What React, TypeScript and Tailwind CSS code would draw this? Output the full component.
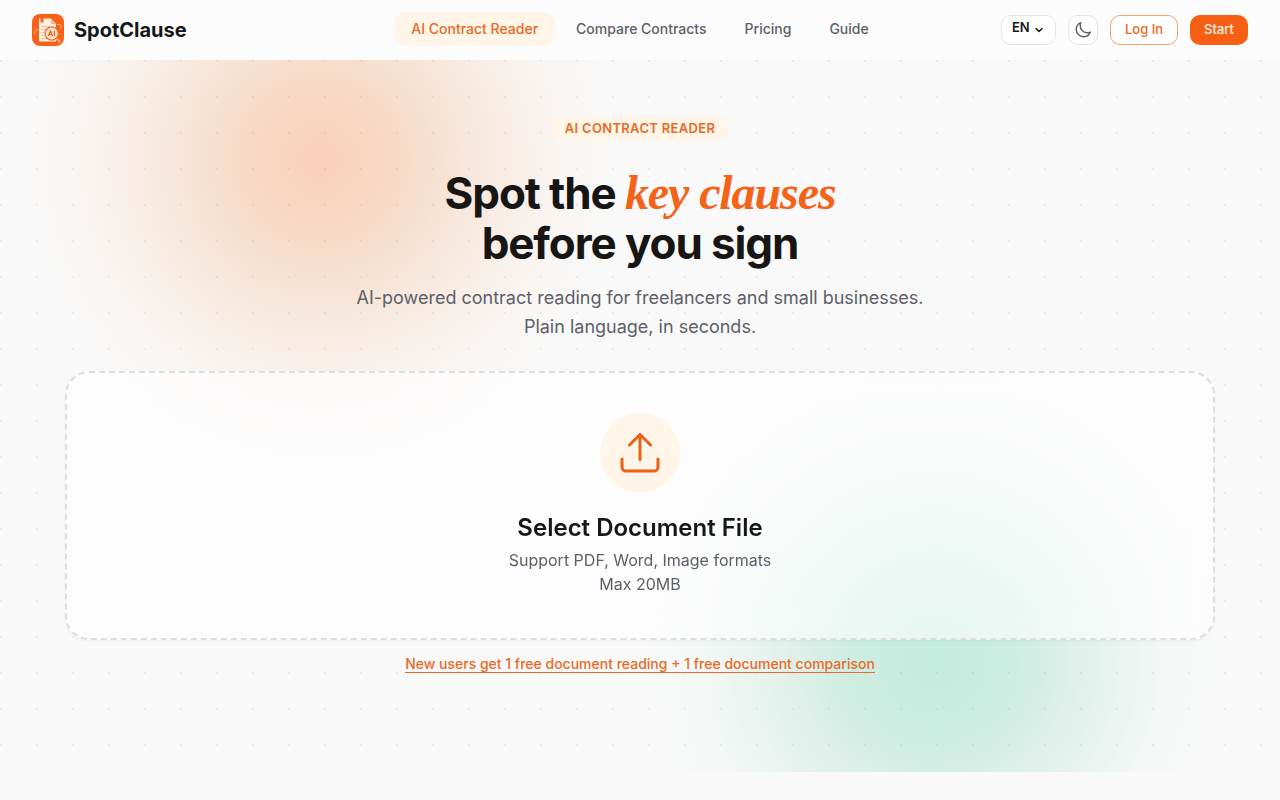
import { useState } from 'react';
import { ChevronDown } from 'lucide-react';

const navLinks = [
  { label: 'AI Contract Reader', href: '#reader', active: true },
  { label: 'Compare Contracts', href: '#compare', active: false },
  { label: 'Pricing', href: '#pricing', active: false },
  { label: 'Guide', href: '#guide', active: false },
];

function Logo() {
  return (
    <svg width="32" height="32" viewBox="0 0 32 32" fill="none" aria-hidden="true">
      <defs>
        <linearGradient id="logo-bg" x1="0" y1="0" x2="32" y2="32">
          <stop stopColor="#f9601a" />
          <stop offset="1" stopColor="#e84708" />
        </linearGradient>
      </defs>
      <rect width="32" height="32" rx="8" fill="url(#logo-bg)" />
      <path d="M7 4.500h1.500v4.500l1.500-1 1.500 1V4.500H19l5 5.500v17.500H7z" fill="#fff0e2" />
      <path d="M19 4.500V10h5z" fill="#f8b58b" />
      <path d="M9 12.500h9M9 15.500h5M9 18.500h3.500M9 21.500h3.500M9 24.500h6" stroke="#f7c3a4" strokeWidth="1" />
      <path d="M5.500 15.500c-3 1.500-4 3-2 4.500M25.500 10.500c4-.3 4.800 1.700 3 3.700" stroke="#ffc49c" strokeWidth="1" strokeLinecap="round" />
      <path d="M24.500 24.500l3.200 3.400" stroke="#f8a46c" strokeWidth="2.500" strokeLinecap="round" />
      <circle cx="19.700" cy="19.500" r="6.500" fill="#fcdcc2" stroke="#ee7635" strokeWidth="1.500" />
      <circle cx="19.700" cy="19.500" r="5.300" stroke="#fff0e0" strokeWidth="1" />
      <path d="M16.500 22l2-5 2 5M17.200 20.500h2.600M22.400 17v5" stroke="#eb641f" strokeWidth="1.200" />
    </svg>
  );
}

function Header() {
  const [lang, setLang] = useState('EN');

  return (
    <header className="grid h-15 grid-cols-[1fr_auto_1fr] items-center bg-[#fcfcfc] px-8">
      <a href="#home" className="flex items-center gap-2.5 text-xl font-bold text-[#171717]">
        <Logo />
        SpotClause
      </a>

      <nav className="flex gap-1 pb-0.5">
        {navLinks.map((link) => (
          <a
            key={link.label}
            href={link.href}
            className={
              link.active
                ? 'rounded-xl bg-[#fff5e8] px-[17px] py-[7px] text-sm font-medium text-[#ea6a25]'
                : 'rounded-xl px-[17px] py-[7px] text-sm font-medium text-[#5d6068]'
            }
          >
            {link.label}
          </a>
        ))}
      </nav>

      <div className="flex items-center justify-end gap-3">
        <div className="relative">
          <select
            aria-label="Language"
            value={lang}
            onChange={(e) => setLang(e.target.value)}
            className="block h-[30px] w-[55px] appearance-none rounded-[10px] border border-[#e2e4e8] bg-white pb-1 pl-2.5 text-[13px] font-semibold text-[#171717]"
          >
            <option>EN</option>
            <option>FR</option>
            <option>ES</option>
          </select>
          <ChevronDown size={12} strokeWidth={3} className="pointer-events-none absolute top-[9px] right-[11px] text-[#171717]" />
        </div>
        <button
          type="button"
          aria-label="Toggle dark mode"
          className="flex size-[30px] items-center justify-center rounded-[10px] border border-[#e2e4e8] bg-white text-[#5d6068]"
        >
          <svg width="18" height="18" viewBox="0 0 24 24" fill="none" stroke="currentColor" strokeWidth="1.900" strokeLinejoin="round" strokeLinecap="round" aria-hidden="true">
            <path d="M21.750 15A9.700 9.700 0 0 1 18 15.750C12.600 15.750 8.250 11.400 8.250 6c0-1.330.270-2.600.750-3.750A9.750 9.750 0 0 0 3 11.250C3 16.640 7.370 21 12.750 21a9.750 9.750 0 0 0 9-6z" />
          </svg>
        </button>
        <button type="button" className="h-[30px] rounded-[10px] border border-[#f5a56b] bg-white px-3.5 text-[13px] font-medium text-[#ea6a25]">
          Log In
        </button>
        <button type="button" className="h-[30px] rounded-[10px] bg-[#f75f14] px-3.5 text-[13px] font-medium text-[#fff3ea]">
          Start
        </button>
      </div>
    </header>
  );
}

function UploadCard() {
  return (
    <label
      htmlFor="document"
      className="flex w-full max-w-[1150px] cursor-pointer flex-col items-center rounded-3xl border-2 border-dashed border-[#dedede] bg-white/60 pt-10 pb-[42px] shadow-[0_1px_3px_rgba(0,0,0,0.05)] backdrop-blur-md"
    >
      <input id="document" type="file" className="sr-only" />
      <span className="flex size-20 items-center justify-center rounded-full bg-[#fff5e8]">
        <svg width="40" height="40" viewBox="0 0 40 40" fill="none" stroke="#ee5f17" strokeWidth="3" strokeLinecap="round" strokeLinejoin="round" aria-hidden="true">
          <path d="M20 26.500V1.500M9.500 12 20 1.500 30.500 12" />
          <path d="M2 26v8a4 4 0 0 0 4 4h28a4 4 0 0 0 4-4v-8" />
        </svg>
      </span>
      <span className="mt-4 mb-px text-2xl leading-[38px] font-semibold text-[#171717]">Select Document File</span>
      <span className="text-center text-base text-[#5d6068]">
        Support PDF, Word, Image formats
        <br />
        Max 20MB
      </span>
    </label>
  );
}

export default function App() {
  return (
    <div className="min-h-screen bg-[#f9f9f9] font-['Inter',sans-serif]">
      <Header />
      <main className="relative isolate flex flex-col items-center overflow-hidden px-8 pt-14 pb-[99px]">
        {/* colour glows, with the dot grid above them */}
        <div className="absolute inset-0 -z-10 bg-[radial-gradient(circle_300px_at_25%_100px,rgba(249,115,50,0.31),rgba(242,130,50,0.25)_28%,rgba(242,130,50,0.15)_50%,rgba(240,130,60,0.04)_78%,transparent),radial-gradient(circle_300px_at_73%_600px,rgba(16,185,129,0.22),rgba(16,185,129,0.19)_28%,rgba(16,170,110,0.10)_50%,rgba(16,170,110,0.02)_78%,transparent)]" />
        <div className="absolute inset-0 -z-10 bg-[radial-gradient(circle_at_1px_1px,rgba(0,0,0,0.06)_1px,transparent_1px)] bg-[size:36px_36px]" />

        <p className="rounded-full bg-[#fff5e8] px-3.5 py-1 text-[13px] leading-[17px] font-semibold tracking-wide text-[#ea6a25]">
          AI CONTRACT READER
        </p>
        <h1 className="mt-[27px] text-center text-[44px] leading-[50px] font-bold tracking-tight text-[#171614]">
          Spot the{' '}
          <em className="font-['Liberation_Serif',serif] text-[48px] leading-[50px] text-[#f56318]">key clauses</em>
          <br />
          before you sign
        </h1>
        <p className="mt-[15px] mb-[30px] text-center text-lg leading-[29px] text-[#5d6068]">
          AI-powered contract reading for freelancers and small businesses.
          <br />
          Plain language, in seconds.
        </p>
        <UploadCard />
        <a href="#signup" className="mt-[15px] border-b border-current text-sm leading-[17px] font-medium text-[#ea6a25]">
          New users get 1 free document reading + 1 free document comparison
        </a>
      </main>
    </div>
  );
}
